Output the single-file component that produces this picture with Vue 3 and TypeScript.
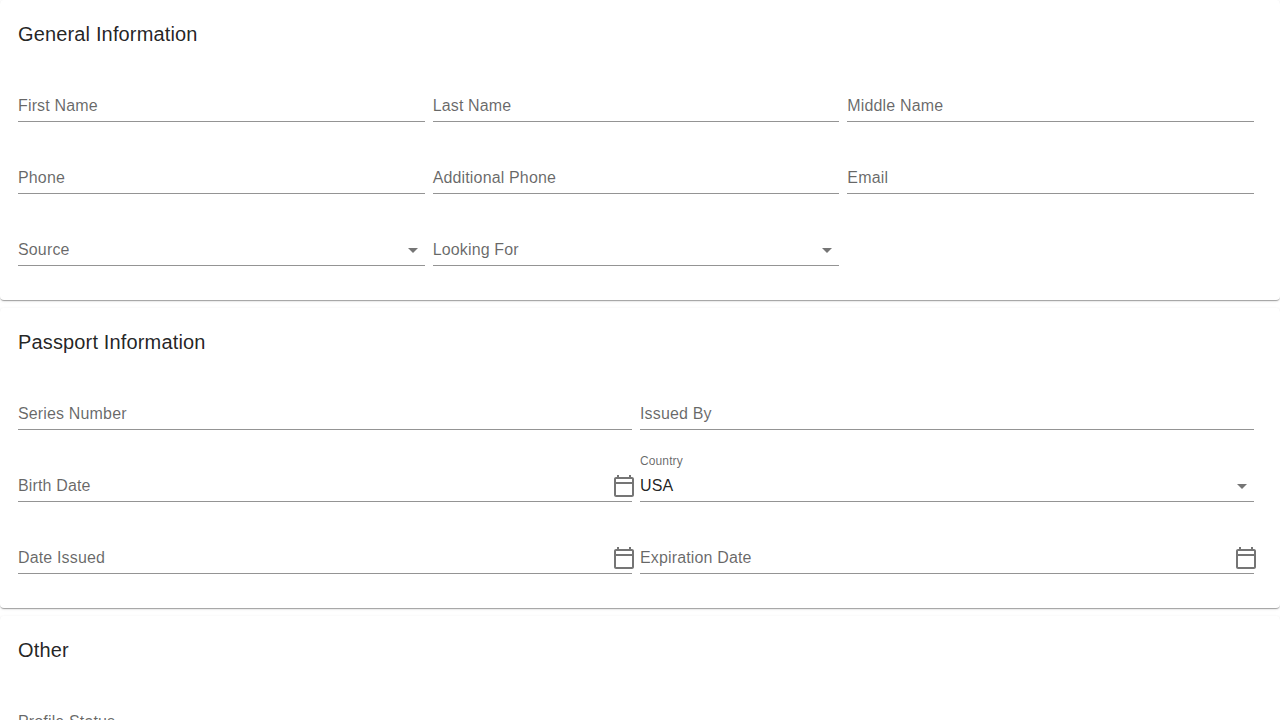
<script setup lang="ts">
type FieldKind = 'text' | 'select' | 'date'

interface Field {
  label: string
  kind: FieldKind
  value?: string
}

interface Section {
  title: string
  columns: 'two' | 'three'
  fields: Field[]
}

const sections: Section[] = [
  {
    title: 'General Information',
    columns: 'three',
    fields: [
      { label: 'First Name', kind: 'text' },
      { label: 'Last Name', kind: 'text' },
      { label: 'Middle Name', kind: 'text' },
      { label: 'Phone', kind: 'text' },
      { label: 'Additional Phone', kind: 'text' },
      { label: 'Email', kind: 'text' },
      { label: 'Source', kind: 'select' },
      { label: 'Looking For', kind: 'select' },
    ],
  },
  {
    title: 'Passport Information',
    columns: 'two',
    fields: [
      { label: 'Series Number', kind: 'text' },
      { label: 'Issued By', kind: 'text' },
      { label: 'Birth Date', kind: 'date' },
      { label: 'Country', kind: 'select', value: 'USA' },
      { label: 'Date Issued', kind: 'date' },
      { label: 'Expiration Date', kind: 'date' },
    ],
  },
  {
    title: 'Other',
    columns: 'three',
    fields: [{ label: 'Profile Status', kind: 'select' }],
  },
]
</script>

<template>
  <main class="page">
    <section v-for="section in sections" :key="section.title" class="card">
      <h2 class="title">{{ section.title }}</h2>
      <div class="fields" :class="section.columns">
        <div v-for="field in section.fields" :key="field.label" class="field">
          <div class="caption">{{ field.value ? field.label : '' }}</div>
          <div class="control">
            <span v-if="field.value" class="value">{{ field.value }}</span>
            <span v-else class="label">{{ field.label }}</span>
            <svg v-if="field.kind === 'select'" class="icon" viewBox="0 0 24 24">
              <path d="M7 10l5 5 5-5z" />
            </svg>
            <svg v-if="field.kind === 'date'" class="icon calendar" viewBox="0 0 24 24">
              <path
                d="M20 3h-1V1h-2v2H7V1H5v2H4c-1.1 0-2 .9-2 2v16c0 1.1.9 2 2 2h16c1.1 0 2-.9 2-2V5c0-1.1-.9-2-2-2zm0 18H4V10h16v11zm0-13H4V5h16v3z"
              />
            </svg>
          </div>
        </div>
      </div>
    </section>
  </main>
</template>

<style>
body {
  background: #fff;
}
</style>

<style scoped>
.page {
  display: flex;
  flex-direction: column;
  gap: 8px;
  height: 100vh;
  overflow: hidden;
  font-family: 'Liberation Sans', Arial, sans-serif;
  color: rgba(0, 0, 0, 0.87);
}

.card {
  flex: none;
  box-sizing: border-box;
  padding: 18px 26px 34px 18px;
  border-radius: 4px;
  background: #fff;
  box-shadow:
    0 2px 1px -1px rgba(0, 0, 0, 0.2),
    0 1px 1px 0 rgba(0, 0, 0, 0.14),
    0 1px 3px 0 rgba(0, 0, 0, 0.12);
}

.title {
  margin: 0 0 24px;
  font-size: 20px;
  font-weight: 400;
  line-height: 32px;
  letter-spacing: 0.15px;
}

.fields {
  display: grid;
  gap: 24px 8px;
}

.three {
  grid-template-columns: repeat(3, 1fr);
}

.two {
  grid-template-columns: repeat(2, 1fr);
}

.field {
  height: 48px;
}

.caption {
  height: 16px;
  font-size: 12px;
  line-height: 14px;
  letter-spacing: 0.11px;
  color: rgba(0, 0, 0, 0.6);
}

.control {
  box-sizing: border-box;
  display: flex;
  align-items: flex-start;
  justify-content: space-between;
  height: 32px;
  padding-top: 4px;
  border-bottom: 1px solid rgba(0, 0, 0, 0.42);
  font-size: 16px;
  line-height: 23px;
  letter-spacing: 0.15px;
}

.label {
  color: rgba(0, 0, 0, 0.6);
}

.icon {
  flex: none;
  width: 24px;
  height: 24px;
  fill: rgba(0, 0, 0, 0.54);
}

.calendar {
  margin-right: -4px;
}
</style>
